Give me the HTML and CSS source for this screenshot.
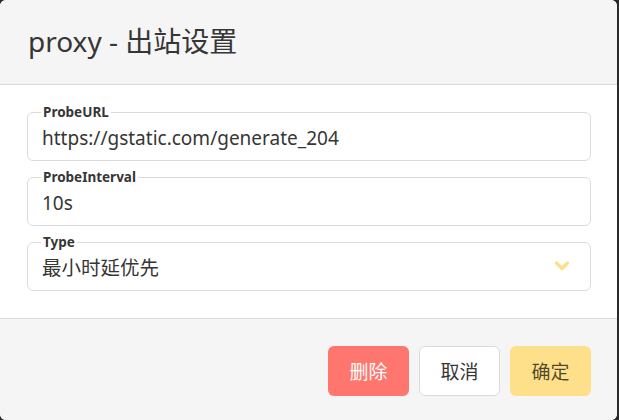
FILE: index.html
```html
<!DOCTYPE html>
<html lang="zh">
<head>
<meta charset="utf-8">
<title>proxy - 出站设置</title>
<link rel="stylesheet" href="styles.css">
</head>
<body>
<div class="card">
  <header class="card-head">
    <p class="card-title">proxy - 出站设置</p>
  </header>
  <section class="card-body">
    <fieldset class="field">
      <legend>ProbeURL</legend>
      <div class="value">https://gstatic.com/generate_204</div>
    </fieldset>
    <fieldset class="field">
      <legend>ProbeInterval</legend>
      <div class="value">10s</div>
    </fieldset>
    <fieldset class="field">
      <legend>Type</legend>
      <div class="value select">
        <span class="cjk">最小时延优先</span>
        <svg class="chevron" width="16" height="12" viewBox="0 0 16 12"><path d="M2.5 3 L8 8.5 L13.5 3" fill="none" stroke="#ffe08a" stroke-width="3.5" stroke-linecap="round" stroke-linejoin="round"/></svg>
      </div>
    </fieldset>
  </section>
  <footer class="card-foot">
    <button class="btn btn-danger">删除</button>
    <button class="btn btn-light">取消</button>
    <button class="btn btn-warning">确定</button>
  </footer>
</div>
</body>
</html>
```

FILE: styles.css
```css
html, body {
  margin: 0;
  padding: 0;
}
body {
  background: #2a2a2a;
  width: 619px;
  height: 420px;
  overflow: hidden;
  font-family: "Noto Sans", "Noto Sans CJK SC", sans-serif;
  color: #363636;
}
.card {
  width: 617px;
  height: 420px;
  display: flex;
  flex-direction: column;
  background: #fff;
  border-radius: 6px;
  overflow: hidden;
}
.card-head {
  height: 84px;
  flex: none;
  display: flex;
  align-items: center;
  padding-left: 28px;
  background: #f5f5f5;
  border-bottom: 1px solid #dbdbdb;
}
.card-title {
  margin: 0;
  font-size: 28px;
  line-height: 1;
  color: #363636;
  padding-bottom: 2px;
}
.card-body {
  flex: 1;
  padding: 20px 26px 0 27px;
  display: flex;
  flex-direction: column;
  gap: 9px;
}
.field {
  margin: 0;
  padding: 0 13px 0 13px;
  border: 1px solid #dbdbdb;
  border-radius: 6px;
  min-width: 0;
}
.field legend {
  padding: 0 2px;
  font-size: 13.5px;
  font-weight: 700;
  line-height: 14px;
  color: #363636;
  margin-left: 0;
}
.value {
  height: 41px;
  font-size: 19px;
  line-height: 24px;
  padding: 7px 0 0 1px;
  box-sizing: border-box;
  white-space: nowrap;
}
.select {
  display: flex;
  align-items: flex-start;
  justify-content: space-between;
}
.cjk {
  font-size: 19.5px;
}
.chevron {
  margin-top: 4px;
  margin-right: 7px;
}
.card-foot {
  height: 102px;
  flex: none;
  box-sizing: border-box;
  border-top: 1px solid #dbdbdb;
  background: #f5f5f5;
  display: flex;
  justify-content: flex-end;
  align-items: flex-start;
  gap: 10px;
  padding: 27px 26px 0 0;
}
.btn {
  width: 81px;
  height: 50px;
  border-radius: 6px;
  border: 1px solid transparent;
  font-family: "Noto Sans", "Noto Sans CJK SC", sans-serif;
  font-size: 19px;
  padding: 0;
  cursor: pointer;
}
.btn-danger {
  background: #ff766f;
  color: #fff;
}
.btn-light {
  background: #fff;
  border-color: #dbdbdb;
  color: #363636;
}
.btn-warning {
  background: #ffe08a;
  color: rgba(0, 0, 0, 0.7);
}
```
